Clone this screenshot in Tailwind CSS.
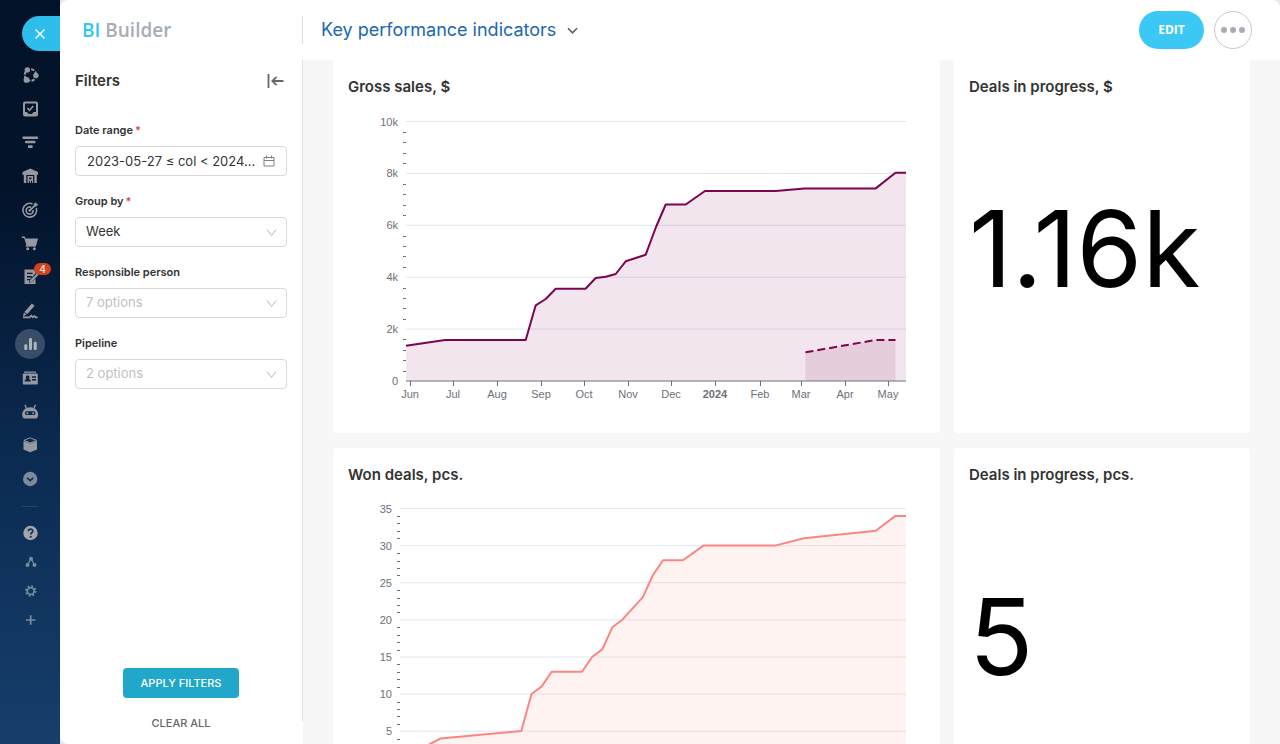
<!DOCTYPE html>
<html lang="en">
<head>
<meta charset="utf-8">
<meta name="viewport" content="width=device-width, initial-scale=1">
<title>BI Builder</title>
<script src="https://cdn.jsdelivr.net/npm/@tailwindcss/browser@4"></script>
</head>
<body class="flex h-screen overflow-hidden bg-[#e3e8ed] font-['Inter',sans-serif] text-[#333333]">

<!-- Sidebar -->
<div class="flex w-[60px] shrink-0 flex-col bg-linear-to-b from-[#03132a] via-[#0b2a50] to-[#163f6c] from-25% via-60%">
  <button aria-label="Close" class="mt-4 mb-[7px] ml-[22px] flex h-[35px] shrink-0 items-center rounded-l-full bg-[#2fbdec] pl-3 text-white">
    <svg class="size-3" viewBox="0 0 12 12" fill="none" stroke="currentColor" stroke-width="1.4"><path d="M1.500 1.500l9 9M10.500 1.500l-9 9"/></svg>
  </button>
  <nav aria-label="Main" class="grid h-[438px] shrink-0 auto-rows-fr place-items-center text-[#9699a0] [&_svg]:size-5">
    <a href="#" aria-label="Collaboration"><svg viewBox="0 0 20 20"><circle cx="10.500" cy="10" r="5.800" fill="none" stroke="currentColor" stroke-width="2" stroke-dasharray="3.200 1.350"/><circle cx="7.300" cy="4.900" r="2.700" fill="currentColor"/><circle cx="15.900" cy="10.500" r="2.700" fill="currentColor"/><circle cx="6.500" cy="14.900" r="2.900" fill="currentColor"/></svg></a>
    <a href="#" aria-label="Tasks"><svg viewBox="0 0 20 20" fill="none" stroke="currentColor"><rect x="4" y="3.500" width="13" height="13" rx="1" stroke-width="2"/><path d="M4 13h3l1.500 2h3.500l1.500-2h3v3H4z" fill="currentColor" stroke="none"/><path d="M7.400 9l2.200 2.200L13.200 7" stroke-width="1.600"/></svg></a>
    <a href="#" aria-label="CRM"><svg viewBox="0 0 20 20" fill="currentColor"><rect x="2.500" y="4.500" width="15.500" height="2.600" rx=".8"/><rect x="5" y="8.700" width="10.500" height="2.500" rx=".8"/><rect x="8" y="13.200" width="4.700" height="2.800" rx=".8"/></svg></a>
    <a href="#" aria-label="Inventory"><svg viewBox="0 0 20 20"><path fill="currentColor" fill-rule="evenodd" d="M10.300 2.500l7.700 3.600v2.600h-1.200V17h-2.500V9H6.300v8H3.800V8.700H2.500V6.100zM7.500 10h5.600v7H7.500zm1.700 1.400v1.900h2.200v-1.900zm-.4 3.400V17h1v-2.200zm2.200 0V17h1v-2.200z"/></svg></a>
    <a href="#" aria-label="Marketing"><svg viewBox="0 0 20 20" fill="none" stroke="currentColor" stroke-width="1.600"><path d="M12.500 3.900A6.900 6.900 0 1 0 16.300 8"/><path d="M11 7.200A3.600 3.600 0 1 0 13.200 10"/><path d="M9.700 10.500L15 5.300" stroke-width="1.800"/><path d="M13.800 4l2.300-2 .4 1.800 1.900.4-2.200 2.400-2.400-.2z" fill="currentColor" stroke="none"/><circle cx="9.700" cy="10.500" r="1.300" fill="currentColor" stroke="none"/></svg></a>
    <a href="#" aria-label="Shop"><svg viewBox="0 0 20 20" fill="currentColor"><path d="M1.800 3.500h3l.8 2H18l-1.800 7H6.500L4.200 5H1.800z"/><path d="M5.800 12h10v1.600h-10z"/><circle cx="7.700" cy="15.800" r="1.500"/><circle cx="14.300" cy="15.800" r="1.500"/></svg></a>
    <a href="#" aria-label="Documents, 4 new" class="relative"><svg viewBox="0 0 20 20"><path fill="currentColor" fill-rule="evenodd" d="M4.500 2.500h9.200L15.500 5v1.300l-3.600 4V9H7v1.400h4.700L10.300 12H7v1.300h2.500L8.900 16l3-1 3.600-3.600V17h-11zM7 5.700V7h5.500V5.700z"/><path fill="currentColor" d="M17 6.200l1.600 1.600-6.800 6.900-2.300.7.700-2.300z"/></svg><span class="absolute -top-[4px] left-[14px] flex h-3 w-[17px] items-center justify-center rounded-full bg-[#cf4321] text-[10px] leading-none font-semibold text-[#e4d6d4]">4</span></a>
    <a href="#" aria-label="e-Signature"><svg viewBox="0 0 20 20"><path fill="currentColor" d="M11.900 2.500l2.700 2.300-7.300 8.300-2.900-2.200z"/><path fill="currentColor" d="M4 11.500l2.600 2.100-3.800 1.800z"/><path d="M3 16.300h6.500l1.800-1.600 1.500 1.600 1.600-1.300 1.300 1.300h2" fill="none" stroke="currentColor" stroke-width="1.700"/></svg></a>
    <a href="#" aria-label="BI Builder" aria-current="page" class="flex size-[30px] items-center justify-center rounded-full bg-[#3a4d66] text-[#b0b5bc]"><svg viewBox="0 0 20 20" fill="currentColor"><rect x="4.300" y="10.300" width="3" height="5.700" rx="1.200"/><rect x="9" y="4" width="3" height="12" rx="1.200"/><rect x="13.700" y="7.800" width="3" height="8.200" rx="1.200"/></svg></a>
    <a href="#" aria-label="Employees"><svg viewBox="0 0 20 20"><path fill="currentColor" fill-rule="evenodd" d="M4 3.500h12v1.200H4zM3.800 5.400h13c.6 0 1 .4 1 1v9.200c0 .6-.4 1-1 1h-13c-.6 0-1-.4-1-1V6.400c0-.6.400-1 1-1zM7.600 7.500a1.900 1.900 0 0 0-1 3.500c-1.300.4-2 1-2 2.500h6.200c0-1.500-.8-2.100-2.100-2.500a1.900 1.900 0 0 0-1.100-3.500zM12 8.300v1.500h4V8.300zm0 2.700v1.500h4V11z"/></svg></a>
    <a href="#" aria-label="Automation"><svg viewBox="0 0 20 20"><path d="M5 2.800l1.300 3.500M15.400 2.800l-1.300 3.500" stroke="currentColor" stroke-width="1.300"/><path fill="currentColor" fill-rule="evenodd" d="M10.200 5.300c4.300 0 8 3 8 7.500 0 2.200-1 3.700-2.600 3.700H4.800c-1.600 0-2.600-1.500-2.600-3.700 0-4.500 3.700-7.500 8-7.500zM6.800 9.300a1.900 1.900 0 0 0 0 3.800h6.800a1.900 1.900 0 0 0 0-3.800z"/><circle cx="7.300" cy="11.200" r="1" fill="currentColor"/><circle cx="13.100" cy="11.200" r="1" fill="currentColor"/></svg></a>
    <a href="#" aria-label="Market"><svg viewBox="0 0 20 20" fill="currentColor"><path d="M10.200 2.800l6.300 2.600-6.300 2.500-6.300-2.500z" fill="none" stroke="currentColor" stroke-width="1"/><path d="M3.500 6.100l6.700 2.500L17 6.100v8.400l-6.800 2.800-6.700-2.800z"/></svg></a>
    <a href="#" aria-label="More" class="text-[#7d8a9a]"><svg viewBox="0 0 20 20"><circle cx="10.200" cy="10" r="7.200" fill="currentColor"/><path d="M7.200 8.800l3 2.800 3-2.800" fill="none" stroke="#0e2f55" stroke-width="1.600"/></svg></a>
  </nav>
  <hr class="mx-[22px] mt-[10px] mb-3 shrink-0 border-[#244668]">
  <nav aria-label="Utilities" class="grid h-[115px] shrink-0 auto-rows-fr place-items-center text-[#788ba0] [&_svg]:size-5">
    <a href="#" aria-label="Help" class="text-[#a2a5a9]"><svg viewBox="0 0 20 20"><circle cx="10.500" cy="10" r="7.200" fill="currentColor"/><path d="M8.400 8.300c0-2.800 4.400-2.700 4.400-.2 0 1.700-2.100 1.600-2.100 3.400" fill="none" stroke="#12345a" stroke-width="1.700"/><circle cx="10.700" cy="13.800" r="1.100" fill="#12345a"/></svg></a>
    <a href="#" aria-label="Site map"><svg viewBox="0 0 20 20" fill="currentColor"><path d="M11 6.500L7.500 13M11 6.500l3.500 6.500" stroke="currentColor" stroke-width="1.300"/><circle cx="11" cy="6.700" r="2"/><circle cx="7.500" cy="13" r="2"/><circle cx="14.500" cy="13" r="2"/></svg></a>
    <a href="#" aria-label="Settings"><svg viewBox="0 0 20 20" fill="none" stroke="currentColor"><circle cx="10.700" cy="10" r="3.400" stroke-width="1.700"/><circle cx="10.700" cy="10" r="4.800" stroke-width="1.800" stroke-dasharray="1.770 2"/></svg></a>
    <a href="#" aria-label="Add"><svg viewBox="0 0 20 20" stroke="currentColor" stroke-width="1.700"><path d="M10.700 5.200v9.600M5.900 10h9.600"/></svg></a>
  </nav>
</div>

<!-- Application panel -->
<div class="flex min-w-0 flex-1 flex-col overflow-hidden rounded-lg rounded-br-none bg-white">
  <header class="flex h-[60px] shrink-0 items-center">
    <div class="w-[242px] shrink-0 pl-[22px] font-['Open_Sans',sans-serif] text-[19px] font-semibold text-[#a8adb4]"><span class="text-[#2fc6f6]">BI</span> Builder</div>
    <div class="h-7 w-px bg-[#dfe0e3]"></div>
    <button class="ml-[18px] flex items-center gap-[11px] text-lg font-normal text-[#2067b0]">Key performance indicators
      <svg class="size-[11px] text-[#525c69]" viewBox="0 0 11 11" fill="none" stroke="currentColor" stroke-width="1.600"><path d="M1 3.300l4.500 4.500L10 3.300"/></svg>
    </button>
    <button class="ml-auto flex h-[38px] w-[65px] items-center justify-center rounded-full bg-[#3bc8f5] font-['Open_Sans',sans-serif] text-xs font-bold text-white">EDIT</button>
    <button aria-label="More actions" class="mr-7 ml-[10px] flex size-[38px] items-center justify-center gap-[3px] rounded-full border border-[#c6cacf]">
      <span class="size-[6px] rounded-full bg-[#a8adb4]"></span><span class="size-[6px] rounded-full bg-[#a8adb4]"></span><span class="size-[6px] rounded-full bg-[#a8adb4]"></span>
    </button>
  </header>

  <div class="flex min-h-0 flex-1">
    <!-- Filters -->
    <aside class="flex w-[242px] shrink-0 flex-col px-[15px] pt-[10px] pb-3">
      <div class="flex h-[22px] items-center justify-between">
        <h2 class="text-[15px] font-semibold">Filters</h2>
        <button aria-label="Collapse filters" class="mr-[3px] text-[#666666]"><svg class="h-4 w-[17px]" viewBox="0 0 17 16" fill="none" stroke="currentColor" stroke-width="1.800"><path d="M1.500 1v14M16.500 8H5.500M9.500 3.800L5.300 8l4.200 4.200"/></svg></button>
      </div>
      <form class="mt-[29px] flex flex-1 flex-col gap-4">
        <div>
          <label for="range" class="mb-[7px] block text-[11px] leading-[18px] font-semibold">Date range<span class="ml-0.5 text-[#e04355]">*</span></label>
          <div class="relative">
            <input id="range" type="text" readonly value="2023-05-27 ≤ col &lt; 2024..." class="h-[30px] w-full rounded-sm border border-[#d9d9d9] pl-[11px] text-[13px]">
            <svg class="absolute top-[9px] right-3 size-3 text-[#808080]" viewBox="0 0 12 12" fill="none" stroke="currentColor"><path d="M1 2.500h10v8.500H1zM1 5.500h10M3.500.500v3M8.500.500v3"/></svg>
          </div>
        </div>
        <div>
          <label for="group" class="mb-[7px] block text-[11px] leading-[18px] font-semibold">Group by<span class="ml-0.5 text-[#e04355]">*</span></label>
          <div class="relative">
            <select id="group" class="h-[30px] w-full appearance-none rounded-sm border border-[#d9d9d9] bg-white pl-[10px] text-[13px]"><option>Week</option></select>
            <svg class="pointer-events-none absolute top-[10px] right-[10px] size-[11px] text-[#b8b8b8]" viewBox="0 0 11 11" fill="none" stroke="currentColor"><path d="M1 2.500l4.500 6L10 2.500"/></svg>
          </div>
        </div>
        <div>
          <label for="person" class="mb-[7px] block text-[11px] leading-[18px] font-semibold">Responsible person</label>
          <div class="relative">
            <select id="person" class="h-[30px] w-full appearance-none rounded-sm border border-[#d9d9d9] bg-white pl-[10px] text-[13px] text-[#bfbfbf]"><option>7 options</option></select>
            <svg class="pointer-events-none absolute top-[10px] right-[10px] size-[11px] text-[#b8b8b8]" viewBox="0 0 11 11" fill="none" stroke="currentColor"><path d="M1 2.500l4.500 6L10 2.500"/></svg>
          </div>
        </div>
        <div>
          <label for="pipeline" class="mb-[7px] block text-[11px] leading-[18px] font-semibold">Pipeline</label>
          <div class="relative">
            <select id="pipeline" class="h-[30px] w-full appearance-none rounded-sm border border-[#d9d9d9] bg-white pl-[10px] text-[13px] text-[#bfbfbf]"><option>2 options</option></select>
            <svg class="pointer-events-none absolute top-[10px] right-[10px] size-[11px] text-[#b8b8b8]" viewBox="0 0 11 11" fill="none" stroke="currentColor"><path d="M1 2.500l4.500 6L10 2.500"/></svg>
          </div>
        </div>
        <div class="mt-auto flex flex-col items-center gap-4">
          <button type="submit" class="h-[30px] w-[116px] rounded-sm bg-[#20a7c9] text-[11px] font-medium text-white">APPLY FILTERS</button>
          <button type="reset" class="text-[11px] leading-[18px] font-medium text-[#666666]">CLEAR ALL</button>
        </div>
      </form>
    </aside>
    <div class="mb-[23px] w-px bg-[#e0e0e0]"></div>

    <!-- Dashboard -->
    <main class="grid min-w-0 flex-1 grid-cols-[607fr_296fr] content-start gap-x-[14px] gap-y-[15px] overflow-hidden bg-[#f7f7f7] px-[30px]">
      <section class="rounded-b bg-white px-[15px] pt-4 pb-4">
        <h2 class="text-[15px] leading-[22px] font-semibold">Gross sales, $</h2>
        <svg id="sales" class="mt-[6px] block w-full" viewBox="348 104 577 313" role="img" aria-label="Gross sales by week" font-family="Liberation Sans, sans-serif" font-size="11" fill="#6e7079"></svg>
      </section>
      <section class="flex flex-col rounded-b bg-white px-[15px] pt-4">
        <h2 class="text-[15px] leading-[22px] font-semibold">Deals in progress, $</h2>
        <p class="pt-[87px] text-[106px] leading-[128px] text-black">1.16k</p>
      </section>
      <section class="rounded bg-white px-[15px] pt-4 pb-4">
        <h2 class="text-[15px] leading-[22px] font-semibold">Won deals, pcs.</h2>
        <svg id="won" class="mt-[6px] block w-full" viewBox="348 492 577 313" role="img" aria-label="Won deals by week" font-family="Liberation Sans, sans-serif" font-size="11" fill="#6e7079"></svg>
      </section>
      <section class="flex flex-col rounded bg-white px-[15px] pt-4">
        <h2 class="text-[15px] leading-[22px] font-semibold">Deals in progress, pcs.</h2>
        <p class="pt-[87px] text-[106px] leading-[128px] text-black">5</p>
      </section>
    </main>
  </div>
</div>

<script>
  // Grid lines, labels and minor ticks of a value axis.
  function valueAxis(labels, left, top, step, textX) {
    let out = '';
    labels.forEach((label, i) => {
      const y = top + i * step;
      out += `<text x="${textX}" y="${y + 4}" text-anchor="end">${label}</text>`;
      out += `<path d="M${left} ${y}H906" stroke="#e0e6f1"/>`;
      for (let k = 1; k < 5; k++) {
        out += `<path d="M${left - 3} ${Math.round(y + step * k / 5) + 0.5}h3" stroke="#6e7079"/>`;
      }
    });
    return out;
  }
  function series(points, base, color, dash) {
    const line = points.map(p => p.join(' ')).join('L');
    const first = points[0][0], last = points[points.length - 1][0];
    return `<path d="M${line}L${last} ${base}L${first} ${base}Z" fill="${color}" fill-opacity=".1"/>` +
      `<path d="M${line}" fill="none" stroke="${color}" stroke-width="2" stroke-linejoin="bevel"${dash ? ` stroke-dasharray="${dash}"` : ''}/>`;
  }
  const months = [['Jun', 410], ['Jul', 453], ['Aug', 497], ['Sep', 541], ['Oct', 584], ['Nov', 628], ['Dec', 671], ['2024', 715], ['Feb', 760], ['Mar', 801], ['Apr', 845], ['May', 888]];
  document.getElementById('sales').innerHTML =
    valueAxis(['10k', '8k', '6k', '4k', '2k'], 406, 121.5, 51.9, 398) +
    '<text x="398" y="385" text-anchor="end">0</text>' +
    series([[406, 345.7], [445, 340], [525.7, 340], [535.7, 305.3], [545.7, 299], [555.7, 288.7], [585.5, 288.7], [595.7, 278], [605.7, 276.7], [615.7, 274], [625.7, 261.3], [645.7, 254.7], [656, 227], [665.7, 204.5], [685.7, 204.5], [705, 191], [775.7, 191], [804.5, 188.4], [875.7, 188.4], [895.5, 172.8], [906, 172.8]], 381, '#7d044e') +
    series([[805.5, 352.3], [875.7, 340], [895.5, 340]], 381, '#7d044e', '8 4') +
    '<path d="M406 381H906" stroke="#6e7079"/>' +
    months.map(([m, x]) => `<path d="M${x + 0.5} 381v5" stroke="#6e7079"/><text x="${x}" y="398" text-anchor="middle"${m === '2024' ? ' font-weight="700"' : ''}>${m}</text>`).join('');
  document.getElementById('won').innerHTML =
    valueAxis(['35', '30', '25', '20', '15', '10', '5'], 400, 508.6, 37.1, 392) +
    series([[400, 760.9], [430, 744], [440.7, 738.4], [521.3, 731], [531.5, 694], [541.5, 686.6], [551.7, 671.7], [582, 671.7], [592.3, 656.8], [602.3, 649.4], [612.3, 627.3], [622.3, 619.7], [642.7, 597.3], [653, 575], [663, 560.3], [683, 560.3], [703.5, 545.6], [775, 545.6], [804, 538.2], [875.7, 530.7], [895.5, 515.9], [906, 515.9]], 768.3, '#fb8581') +
    '<path d="M400 768H906" stroke="#6e7079"/>';
</script>
</body>
</html>
